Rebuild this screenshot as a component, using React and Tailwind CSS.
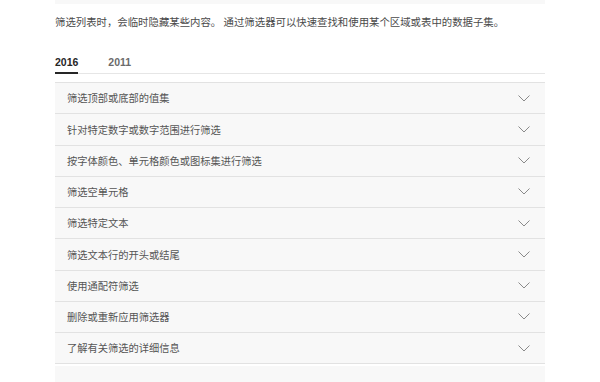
const items = [
  "筛选顶部或底部的值集",
  "针对特定数字或数字范围进行筛选",
  "按字体颜色、单元格颜色或图标集进行筛选",
  "筛选空单元格",
  "筛选特定文本",
  "筛选文本行的开头或结尾",
  "使用通配符筛选",
  "删除或重新应用筛选器",
  "了解有关筛选的详细信息",
];

const cjk = { fontFamily: '"Noto Sans CJK SC", "Noto Sans", sans-serif' };

function Chevron() {
  return (
    <svg width="12" height="7" viewBox="0 0 12 7" fill="none">
      <path d="M0.5 0.5 L6 6 L11.5 0.5" stroke="#8a8a8a" strokeWidth="1" />
    </svg>
  );
}

export default function App() {
  return (
    <div className="min-h-[382px] bg-white" style={cjk}>
      <div className="mx-auto w-[490px]">
        <div className="h-[4px] bg-[#f8f8f8]" />
        <p className="mt-[11px] text-[10.4px] leading-[14px] text-[#4a4a4a]">
          筛选列表时，会临时隐藏某些内容。 通过筛选器可以快速查找和使用某个区域或表中的数据子集。
        </p>

        <div
          className="mt-[27px] flex border-b border-[#e6e6e6]"
          style={{ fontFamily: '"Liberation Sans", Arial, sans-serif' }}
        >
          <div className="border-b-2 border-[#262626] pb-[3px] text-[10.5px] font-bold leading-[13px] text-[#262626] -mb-px">
            2016
          </div>
          <div className="ml-[30px] pb-[3px] text-[10.5px] font-bold leading-[13px] text-[#6b6b6b]">
            2011
          </div>
        </div>

        <div className="mt-[8px]">
          {items.map((t) => (
            <div
              key={t}
              className="flex h-[31.25px] items-center justify-between border-t border-[#e2e2e2] bg-[#f8f8f8] pl-[12px] pr-[15px]"
            >
              <span className="text-[10.25px] text-[#555555]">{t}</span>
              <Chevron />
            </div>
          ))}
          <div className="border-t border-[#e2e2e2]" />
          <div className="mt-[2px] h-[20px] bg-[#f8f8f8]" />
        </div>
      </div>
    </div>
  );
}
